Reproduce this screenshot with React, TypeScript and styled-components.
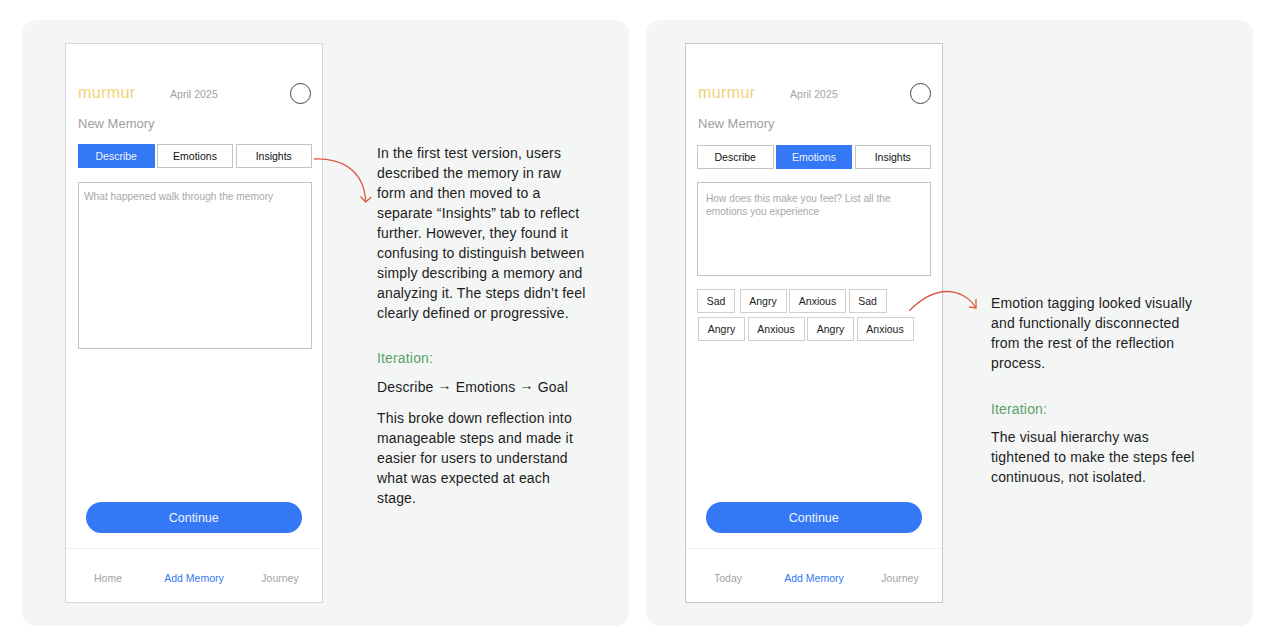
import React from 'react';
import styled, { createGlobalStyle } from 'styled-components';

const GlobalStyle = createGlobalStyle`
  html, body {
    margin: 0;
    padding: 0;
    background: #fff;
    font-family: 'Liberation Sans', Arial, sans-serif;
  }
`;

const Page = styled.div`
  width: 1274px;
  height: 644px;
  box-sizing: border-box;
  padding: 20px 21px 18px 22px;
  display: flex;
  gap: 17px;
  overflow: hidden;
`;

const Panel = styled.section<{ $inset: number }>`
  position: relative;
  width: 607px;
  height: 606px;
  box-sizing: border-box;
  padding: 23px 0 23px ${p => p.$inset}px;
  display: flex;
  background: #f4f6f5;
  border-radius: 14px;
`;

const Phone = styled.div<{ $line: string }>`
  width: 258px;
  flex: none;
  box-sizing: border-box;
  border: 1px solid ${p => p.$line};
  background: #fff;
  display: flex;
  flex-direction: column;
`;

const Header = styled.div`
  display: flex;
  align-items: center;
  height: 21px;
  margin: 39px 11px 0 12px;
`;

const Logo = styled.div`
  width: 92px;
  font-size: 16px;
  letter-spacing: 0.4px;
  color: #f0d27a;
  margin-top: -1px;
`;

const DateLabel = styled.div`
  flex: 1;
  font-size: 10.5px;
  letter-spacing: 0.05px;
  color: #a3a3a3;
`;

const Avatar = styled.div`
  width: 21px;
  height: 21px;
  box-sizing: border-box;
  border: 1px solid #444;
  border-radius: 50%;
`;

const Title = styled.div`
  margin: 11.5px 0 0 12px;
  font-size: 13px;
  line-height: 16px;
  color: #a0a0a0;
`;

const Tabs = styled.div<{ $left: number; $top: number }>`
  width: 234px;
  display: grid;
  grid-template-columns: repeat(3, 1fr);
  column-gap: 2.25px;
  margin: ${p => p.$top}px 0 0 ${p => p.$left}px;
`;

const Tab = styled.div<{ $active?: boolean }>`
  height: 24px;
  box-sizing: border-box;
  display: flex;
  align-items: center;
  justify-content: center;
  font-size: 10.5px;
  color: ${p => (p.$active ? '#f0f5ff' : '#111')};
  background: ${p => (p.$active ? '#3478f6' : '#fff')};
  border: 1px solid ${p => (p.$active ? '#3478f6' : '#c4c4c4')};
`;

const TextBox = styled.div<{ $height: number; $left: number; $gap: number; $pad: number; $padTop: number }>`
  height: ${p => p.$height}px;
  width: 234px;
  box-sizing: border-box;
  margin: ${p => p.$gap}px 0 0 ${p => p.$left}px;
  padding: ${p => p.$padTop}px ${p => p.$pad}px 0;
  border: 1px solid #c4c4c4;
  font-size: 10.2px;
  line-height: 13px;
  color: #a8a8a8;
`;

const Chips = styled.div`
  display: flex;
  flex-direction: column;
  gap: 4px;
  margin: 13px 0 0 11px;
`;

const ChipRow = styled.div<{ $indent?: number }>`
  display: flex;
  gap: 2.5px;
  margin-left: ${p => p.$indent ?? 0}px;
`;

const Chip = styled.div<{ $width: number; $after?: number }>`
  width: ${p => p.$width}px;
  height: 24px;
  box-sizing: border-box;
  display: flex;
  align-items: center;
  justify-content: center;
  margin-right: ${p => p.$after ?? 0}px;
  border: 1px solid #cfcfcf;
  font-size: 10.5px;
  color: #222;
`;

const Spacer = styled.div`
  flex: 1;
`;

const ContinueButton = styled.div`
  width: 216.5px;
  height: 31px;
  margin: 0 0 15px 19.5px;
  display: flex;
  align-items: center;
  justify-content: center;
  border-radius: 16px;
  background: #3478f6;
  color: #f2f6ff;
  font-size: 12.5px;
`;

const Nav = styled.div`
  height: 54px;
  box-sizing: border-box;
  border-top: 1px solid #efefef;
  display: grid;
  grid-template-columns: 84px 88px 84px;
  align-items: center;
  text-align: center;
  font-size: 10.5px;
  padding-top: 4px;
`;

const NavItem = styled.div<{ $active?: boolean }>`
  color: ${p => (p.$active ? '#3478f6' : '#a3a3a3')};
`;

const Notes = styled.div<{ $left: number; $top: number; $width: number }>`
  margin: ${p => p.$top}px 0 0 ${p => p.$left}px;
  width: ${p => p.$width}px;
  font-size: 14px;
  line-height: 20px;
  letter-spacing: 0.16px;
  color: #1c1c1c;
`;

const Para = styled.p<{ $gap?: number }>`
  margin: ${p => p.$gap ?? 0}px 0 0;
`;

const IterationLabel = styled.p<{ $gap: number }>`
  margin: ${p => p.$gap}px 0 0;
  color: #5d9e6c;
`;

const ArrowGlyph = styled.span`
  line-height: 1;
  vertical-align: 2px;
`;

const Arrow = styled.svg<{ $x: number; $y: number }>`
  position: absolute;
  left: ${p => p.$x}px;
  top: ${p => p.$y}px;
  overflow: visible;
  fill: none;
  stroke: #dd5a48;
  stroke-width: 1.3;
`;

interface MemoryScreenProps {
  active: string;
  firstNav: string;
  line: string;
  left: number;
  tabsTop: number;
  children: React.ReactNode;
}

const MemoryScreen: React.FC<MemoryScreenProps> = ({ active, firstNav, line, left, tabsTop, children }) => (
  <Phone $line={line}>
    <Header>
      <Logo>murmur</Logo>
      <DateLabel>April 2025</DateLabel>
      <Avatar />
    </Header>
    <Title>New Memory</Title>
    <Tabs $left={left} $top={tabsTop}>
      {['Describe', 'Emotions', 'Insights'].map(t => (
        <Tab key={t} $active={t === active}>
          {t}
        </Tab>
      ))}
    </Tabs>
    {children}
    <Spacer />
    <ContinueButton>Continue</ContinueButton>
    <Nav>
      <NavItem>{firstNav}</NavItem>
      <NavItem $active>Add Memory</NavItem>
      <NavItem>Journey</NavItem>
    </Nav>
  </Phone>
);

const App: React.FC = () => (
  <Page>
    <GlobalStyle />
    <Panel $inset={43}>
      <MemoryScreen active="Describe" firstNav="Home" line="#d6d6d6" left={12} tabsTop={12.5}>
        <TextBox $height={167} $left={12} $gap={14} $pad={5} $padTop={7}>
          What happened walk through the memory
        </TextBox>
      </MemoryScreen>
      <Arrow $x={292} $y={138} width="58" height="46" viewBox="0 0 58 46">
        <path d="M0 1C22 0 50 8 51.7 43.7" />
        <path d="M46.5 38.500L51.700 44L57.300 39" />
      </Arrow>
      <Notes $left={54} $top={100} $width={215}>
        <Para>
          In the first test version, users described the memory in raw form and then moved to a separate “Insights” tab
          to reflect further. However, they found it confusing to distinguish between simply describing a memory and
          analyzing it. The steps didn’t feel clearly defined or progressive.
        </Para>
        <IterationLabel $gap={25}>Iteration:</IterationLabel>
        <Para $gap={9}>
          Describe <ArrowGlyph>→</ArrowGlyph> Emotions <ArrowGlyph>→</ArrowGlyph> Goal
        </Para>
        <Para $gap={11}>
          This broke down reflection into manageable steps and made it easier for users to understand what was expected
          at each stage.
        </Para>
      </Notes>
    </Panel>
    <Panel $inset={39}>
      <MemoryScreen active="Emotions" firstNav="Today" line="#c8c8c8" left={11} tabsTop={13.5}>
        <TextBox $height={94} $left={11} $gap={13} $pad={8} $padTop={9}>
          How does this make you feel? List all the emotions you experience
        </TextBox>
        <Chips>
          <ChipRow>
            <Chip $width={38} $after={2}>
              Sad
            </Chip>
            <Chip $width={47}>Angry</Chip>
            <Chip $width={57}>Anxious</Chip>
            <Chip $width={38}>Sad</Chip>
          </ChipRow>
          <ChipRow $indent={1}>
            <Chip $width={47}>Angry</Chip>
            <Chip $width={57}>Anxious</Chip>
            <Chip $width={47}>Angry</Chip>
            <Chip $width={57}>Anxious</Chip>
          </ChipRow>
        </Chips>
      </MemoryScreen>
      <Arrow $x={263} $y={271} width="68" height="22" viewBox="0 0 68 22">
        <path d="M0.3 19.700C12 8 25 0.500 38 0.500C50 0.500 61 7 67 17" />
        <path d="M60 16L67 17L67 8" />
      </Arrow>
      <Notes $left={48} $top={250} $width={208}>
        <Para>Emotion tagging looked visually and functionally disconnected from the rest of the reflection process.</Para>
        <IterationLabel $gap={26}>Iteration:</IterationLabel>
        <Para $gap={8}>The visual hierarchy was tightened to make the steps feel continuous, not isolated.</Para>
      </Notes>
    </Panel>
  </Page>
);

export default App;
